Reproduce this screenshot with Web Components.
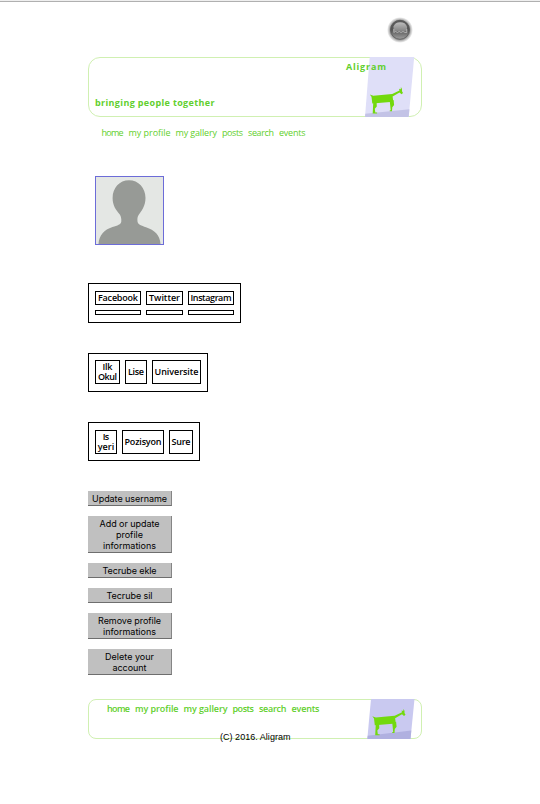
<!DOCTYPE html>
<html lang="en">
<head>
<meta charset="utf-8">
<title>Aligram</title>
<style>
html, body { margin: 0; background: #fff; }
body { font-family: "Open Sans", "Noto Sans", sans-serif; font-size: 9px; }
</style>
</head>
<body>
<profile-page></profile-page>
<script>
const define = (name, html, setup) => customElements.define(name, class extends HTMLElement {
  connectedCallback() {
    if (this.shadowRoot) return;
    this.attachShadow({ mode: 'open' }).innerHTML = html;
    if (setup) setup(this, this.shadowRoot);
  }
});

/* One line of text, tracked so that it fills the width given in w. */
define('fit-text', `<style>
:host { display: block; white-space: nowrap; flex: none; }
span { display: inline-block; }
</style><span><slot></slot></span>`, (el, root) => {
  const w = parseFloat(el.getAttribute('w'));
  const span = root.querySelector('span');
  const n = el.textContent.length;
  const extra = (w - span.getBoundingClientRect().width) / Math.max(1, n - 1);
  el.style.width = w + 'px';
  span.style.letterSpacing = extra.toFixed(3) + 'px';
});

define('nav-links', `<style>
:host { display: flex; gap: 5px; color: #5fcf2b; line-height: 12px; }
</style><slot></slot>`);

define('goat-art', `<style>
:host { display: block; }
svg { display: block; width: 100%; height: 100%; }
.panel { fill: var(--panel, #dfdff8); }
.floor { fill: var(--floor, #c3c3e6); }
</style>
<svg></svg>`, (el, root) => {
  const svg = root.querySelector('svg');
  const small = el.hasAttribute('small');
  svg.setAttribute('viewBox', small ? '0 0 50 40' : '0 0 50 60');
  const shapes = small
    ? `<path class="panel" d="M6 0H49.500L45.500 40H2.300z"/><path class="floor" d="M2.700 36.800L46.300 31.500L45.500 40H2.300z"/>`
    : `<path class="panel" d="M4.700 0H49.200L43.700 60H0z"/><path class="floor" d="M.3 56.800L44.400 52.200L43.700 60H0z"/>`;
  const goat = `<g transform="${small ? 'translate(2.500 -20.200)' : ''}" fill="#72d90d">
<path d="M4.800 37.500L8.300 38.800L27.200 36.900L34.500 33.500L34 31.700L35.800 32.300L35.900 30.100L37 32L37 34.300L38 36L36.500 37.300L34.500 35.500L27.600 39.400L28.300 44.800L7.300 46.400L6.500 39.800z"/>
<path d="M8.300 45H11.600L11.800 49.500L9.800 51.700L10.300 55.400H12.100V56.500H7.700z"/>
<path d="M24.800 44.500L28.600 43L29.100 48L27.300 50.300L27 54.200H24.800V53.200H25.700z"/></g>`;
  svg.innerHTML = shapes + goat;
});

define('round-box', `<style>
:host { display: block; box-sizing: border-box; position: relative; width: 334px; height: var(--h); border: 1px solid #d0f0b2; border-radius: var(--r, 12px); }
::slotted(goat-art) { position: absolute; top: -1px; z-index: 0; }
::slotted(:not(goat-art)) { position: relative; z-index: 1; }
</style><slot></slot>`);

define('chat-badge', `<style>
:host { display: block; width: 26px; height: 26px; }
svg { display: block; }
</style>
<svg width="26" height="26" viewBox="0 0 26 26">
<defs>
<radialGradient id="halo"><stop offset=".76" stop-color="#999"/><stop offset=".9" stop-color="#d4d4d4"/><stop offset="1" stop-color="#f8f8f8"/></radialGradient>
<linearGradient id="ball" x2="0" y2="1"><stop offset="0" stop-color="#5c5c5c"/><stop offset=".5" stop-color="#555"/><stop offset="1" stop-color="#a0a0a0"/></linearGradient>
<linearGradient id="shine" x2="0" y2="1"><stop offset="0" stop-color="#bdbdbd"/><stop offset="1" stop-color="#808080"/></linearGradient>
</defs>
<circle cx="13" cy="13" r="12.800" fill="url(#halo)"/>
<circle cx="13" cy="12.800" r="9.500" fill="url(#ball)" stroke="#555" stroke-width=".8"/>
<path d="M6.500 14.500V9.500Q8 5.200 13.200 5.200Q18.500 5.200 20 9.500V14.500z" fill="url(#shine)"/>
<path d="M6.800 12V15.500L8.500 14.500L10.500 15.500L12.200 14.500L14 15.500L16 14.500L18 15.500H19.800V12" fill="none" stroke="#c8c8c8" stroke-width=".7"/>
</svg>`);

define('user-avatar', `<style>
:host { display: block; box-sizing: border-box; width: 69px; height: 69px; border: 1px solid #6c6cd8; background: #e4e7e4; }
svg { display: block; }
</style>
<svg width="67" height="67" viewBox="0 0 67 67"><path fill="#979a96" d="M33 3.300C42.500 3.300 49.500 11 49.500 21C49.500 29 45.500 34 42.600 38C41.300 40 41.300 42 41.500 44.500C41.800 47.500 45.500 48.700 50 50.200C58.500 53 64 58 64.500 67H2.500C3.200 58 8 52.700 16.500 50C21.500 48.500 25 47.500 25.300 44.500C25.500 41.500 25 39.500 23.800 37.500C20 33 16.600 28.500 16.600 21C16.600 11 23.500 3.300 33 3.300z"/></svg>`);

/* cols: cell widths in px */
define('info-table', `<style>
:host { display: grid; box-sizing: border-box; width: max-content; gap: 5px; border: 1px solid #000; padding: var(--pad, 6px 6px 7px); }
::slotted(*) { box-sizing: border-box; border: 1px solid #000; }
</style><slot></slot>`, el => {
  el.style.gridTemplateColumns = el.getAttribute('cols').split(' ').map(c => c + 'px').join(' ');
});

define('info-cell', `<style>
:host { display: flex; flex-direction: column; align-items: center; justify-content: center; height: var(--ch, 24px); font-weight: 600; line-height: 10px; color: #000; }
</style><slot></slot>`);

define('action-button', `<style>
:host { display: block; width: 84px; }
button { display: flex; flex-direction: column; align-items: center; box-sizing: border-box; width: 100%; margin: 0; padding: 2px 0 1px; border: 0; border-right: 1px solid #858585; border-bottom: 1px solid #6e6e6e; border-radius: 0; background: #c0c0c0; color: #000; font: 9px/11px Inter, "Noto Sans", sans-serif; }
</style><button><slot></slot></button>`);

define('profile-page', `<style>
:host { display: flex; flex-direction: column; box-sizing: border-box; width: 540px; height: 804px; padding-left: 88px; background: linear-gradient(#efefef 1px, #b0b0b0 1px, #b0b0b0 2px, #fff 2px); }
chat-badge { margin: 17px 0 14px 299px; }
.head { --h: 60px; --r: 12px; color: #62cf2e; font-weight: 700; }
.head goat-art { width: 50px; height: 60px; left: 276px; }
.brand { margin: 3px 0 0 257px; line-height: 12px; }
.tag { margin: 24px 0 0 6px; line-height: 12px; }
.top { margin: 10px 0 0 13.500px; }
user-avatar { margin: 37px 0 0 7px; }
.t1 { margin-top: 38px; --pad: 7px 6px 7px; }
.t1 info-cell { --ch: 14px; }
.t1 .e { --ch: 5px; }
.t2 { margin-top: 30px; }
.t3 { margin-top: 30px; --pad: 7px 6px 6px; }
.actions { display: flex; flex-direction: column; gap: 10px; margin-top: 30px; }
.foot { --h: 40px; --r: 8px; margin-top: 24px; font-weight: 600; }
.foot goat-art { width: 50px; height: 40px; left: 276px; --panel: #c9c9f0; --floor: #b0b0e0; }
.foot nav-links { padding: 3px 0 0 18px; }
.copy { margin: 16px 0 0 131px; font: 9px/12px "Liberation Sans", sans-serif; color: #000; }
</style>
<chat-badge></chat-badge>
<round-box class="head">
<goat-art></goat-art>
<fit-text class="brand" w="40">Aligram</fit-text>
<fit-text class="tag" w="119.500">bringing people together</fit-text>
</round-box>
<nav-links class="top"><fit-text w="22">home</fit-text><fit-text w="42">my profile</fit-text><fit-text w="41.500">my gallery</fit-text><fit-text w="21">posts</fit-text><fit-text w="26">search</fit-text><fit-text w="26.500">events</fit-text></nav-links>
<user-avatar></user-avatar>
<info-table class="t1" cols="46 37 46"><info-cell><fit-text w="40">Facebook</fit-text></info-cell><info-cell><fit-text w="31">Twitter</fit-text></info-cell><info-cell><fit-text w="41">Instagram</fit-text></info-cell><info-cell class="e"></info-cell><info-cell class="e"></info-cell><info-cell class="e"></info-cell></info-table>
<info-table class="t2" cols="25 22 49"><info-cell><fit-text w="10">Ilk</fit-text><fit-text w="19">Okul</fit-text></info-cell><info-cell><fit-text w="16">Lise</fit-text></info-cell><info-cell><fit-text w="44">Universite</fit-text></info-cell></info-table>
<info-table class="t3" cols="22 42 24"><info-cell><fit-text w="6.500">Is</fit-text><fit-text w="16.500">yeri</fit-text></info-cell><info-cell><fit-text w="37">Pozisyon</fit-text></info-cell><info-cell><fit-text w="19">Sure</fit-text></info-cell></info-table>
<div class="actions">
<action-button><fit-text w="75">Update username</fit-text></action-button>
<action-button><fit-text w="60">Add or update</fit-text><fit-text w="27">profile</fit-text><fit-text w="53">informations</fit-text></action-button>
<action-button><fit-text w="54">Tecrube ekle</fit-text></action-button>
<action-button><fit-text w="46">Tecrube sil</fit-text></action-button>
<action-button><fit-text w="63">Remove profile</fit-text><fit-text w="53">informations</fit-text></action-button>
<action-button><fit-text w="49">Delete your</fit-text><fit-text w="34">account</fit-text></action-button>
</div>
<round-box class="foot">
<goat-art small></goat-art>
<nav-links><fit-text w="23">home</fit-text><fit-text w="43.500">my profile</fit-text><fit-text w="44">my gallery</fit-text><fit-text w="21.500">posts</fit-text><fit-text w="27.500">search</fit-text><fit-text w="28">events</fit-text></nav-links>
<fit-text class="copy" w="70.500">(C) 2016. Aligram</fit-text>
</round-box>`);
</script>
</body>
</html>
